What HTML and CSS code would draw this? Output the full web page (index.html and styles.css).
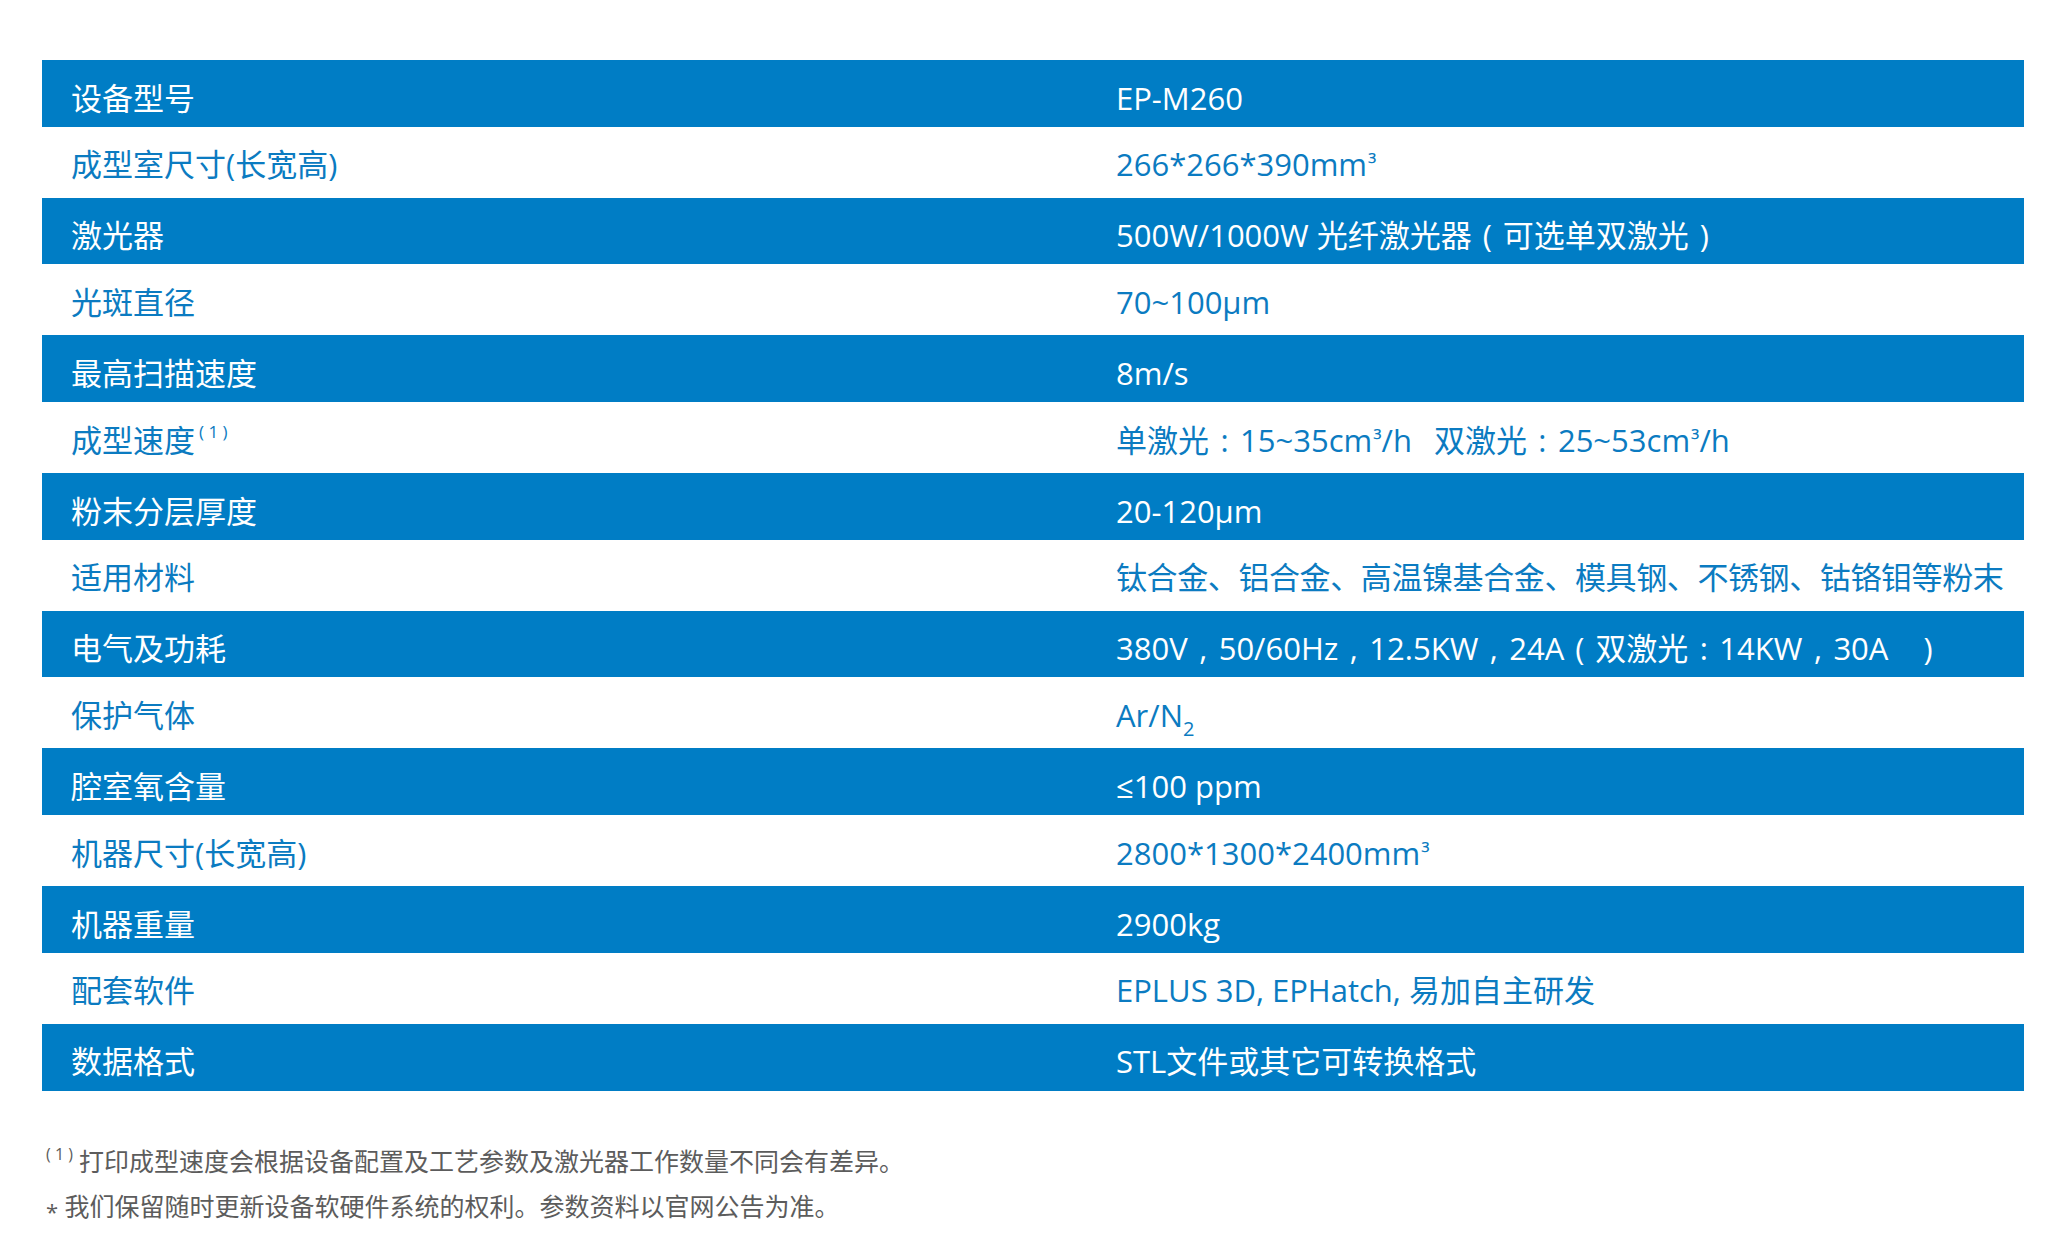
FILE: index.html
```html
<!DOCTYPE html>
<html lang="zh-CN">
<head>
<meta charset="utf-8">
<title>EP-M260 设备参数</title>
<link rel="stylesheet" href="styles.css">
</head>
<body>
<div class="page">
  <div class="spec">
    <div class="row dark"><div class="k">设备型号</div><div class="v">EP-M260</div></div>
    <div class="row"><div class="k">成型室尺寸(长宽高)</div><div class="v">266*266*390mm<span class="cube">³</span></div></div>
    <div class="row dark"><div class="k">激光器</div><div class="v">500W/1000W 光纤激光器<span class="p">(</span>可选单双激光<span class="p">)</span></div></div>
    <div class="row"><div class="k">光斑直径</div><div class="v">70~100μm</div></div>
    <div class="row dark"><div class="k">最高扫描速度</div><div class="v">8m/s</div></div>
    <div class="row"><div class="k">成型速度<sup class="ref">( 1 )</sup></div><div class="v">单激光<span class="p">:</span>15~35cm<span class="cube">³</span>/h<span class="gap"></span>双激光<span class="p">:</span>25~53cm<span class="cube">³</span>/h</div></div>
    <div class="row dark"><div class="k">粉末分层厚度</div><div class="v">20-120μm</div></div>
    <div class="row"><div class="k">适用材料</div><div class="v tight">钛合金、铝合金、高温镍基合金、模具钢、不锈钢、钴铬钼等粉末</div></div>
    <div class="row dark"><div class="k">电气及功耗</div><div class="v">380V<span class="p">,</span>50/60Hz<span class="p">,</span>12.5KW<span class="p">,</span>24A<span class="p">(</span>双激光<span class="p">:</span>14KW<span class="p">,</span>30A &nbsp;&nbsp;<span class="p">)</span></div></div>
    <div class="row"><div class="k">保护气体</div><div class="v">Ar/N<sub class="sub">2</sub></div></div>
    <div class="row dark"><div class="k">腔室氧含量</div><div class="v">≤100 ppm</div></div>
    <div class="row"><div class="k">机器尺寸(长宽高)</div><div class="v">2800*1300*2400mm<span class="cube">³</span></div></div>
    <div class="row dark"><div class="k">机器重量</div><div class="v">2900kg</div></div>
    <div class="row"><div class="k">配套软件</div><div class="v">EPLUS 3D, EPHatch, 易加自主研发</div></div>
    <div class="row dark"><div class="k">数据格式</div><div class="v">STL文件或其它可转换格式</div></div>
  </div>
  <div class="notes">
    <p class="note"><sup class="note-ref">( 1 )</sup>打印成型速度会根据设备配置及工艺参数及激光器工作数量不同会有差异。</p>
    <p class="note"><span class="star">*</span> 我们保留随时更新设备软硬件系统的权利。参数资料以官网公告为准。</p>
  </div>
</div>
</body>
</html>
```
FILE: styles.css
```css
html, body {
  margin: 0;
  padding: 0;
  background: #ffffff;
}

body {
  font-family: "Open Sans", "Noto Sans CJK SC", sans-serif;
}

.page {
  padding: 60px 46px 0 42px;
}

.spec {
  display: flex;
  flex-direction: column;
}

.row {
  display: flex;
  align-items: flex-start;
  box-sizing: border-box;
  height: 71px;
  padding: 17.5px 0 0 29px;
  font-size: 31px;
  line-height: 40px;
  color: #0b7bc1;
}

.row.dark {
  height: 66.7px;
  background: #007dc5;
  color: #ffffff;
}

.k {
  flex: none;
  width: 1045px;
  white-space: nowrap;
}

.v {
  white-space: nowrap;
}

.v.tight {
  letter-spacing: -0.4px;
}

/* full-width punctuation, centred in a 1em box */
.p {
  display: inline-block;
  width: 1em;
  text-align: center;
}

.gap {
  display: inline-block;
  width: 22px;
}

.cube {
  font-size: 24px;
  line-height: 0;
  vertical-align: 3px;
  margin-left: 1px;
}

.ref {
  font-size: 17px;
  line-height: 0;
  vertical-align: 14px;
  margin-left: 4px;
  white-space: pre;
}

.sub {
  font-size: 20px;
  line-height: 0;
  vertical-align: -9px;
}

.notes {
  margin-top: 48px;
  padding-left: 4px;
  color: #5c5c5c;
  font-size: 25px;
  line-height: 45px;
}

.note {
  margin: 0;
  white-space: nowrap;
}

.note-ref {
  font-size: 16px;
  line-height: 0;
  vertical-align: 11px;
  margin-right: 6px;
  white-space: pre;
}

.star {
  font-size: 22px;
  position: relative;
  top: 4px;
}
```
